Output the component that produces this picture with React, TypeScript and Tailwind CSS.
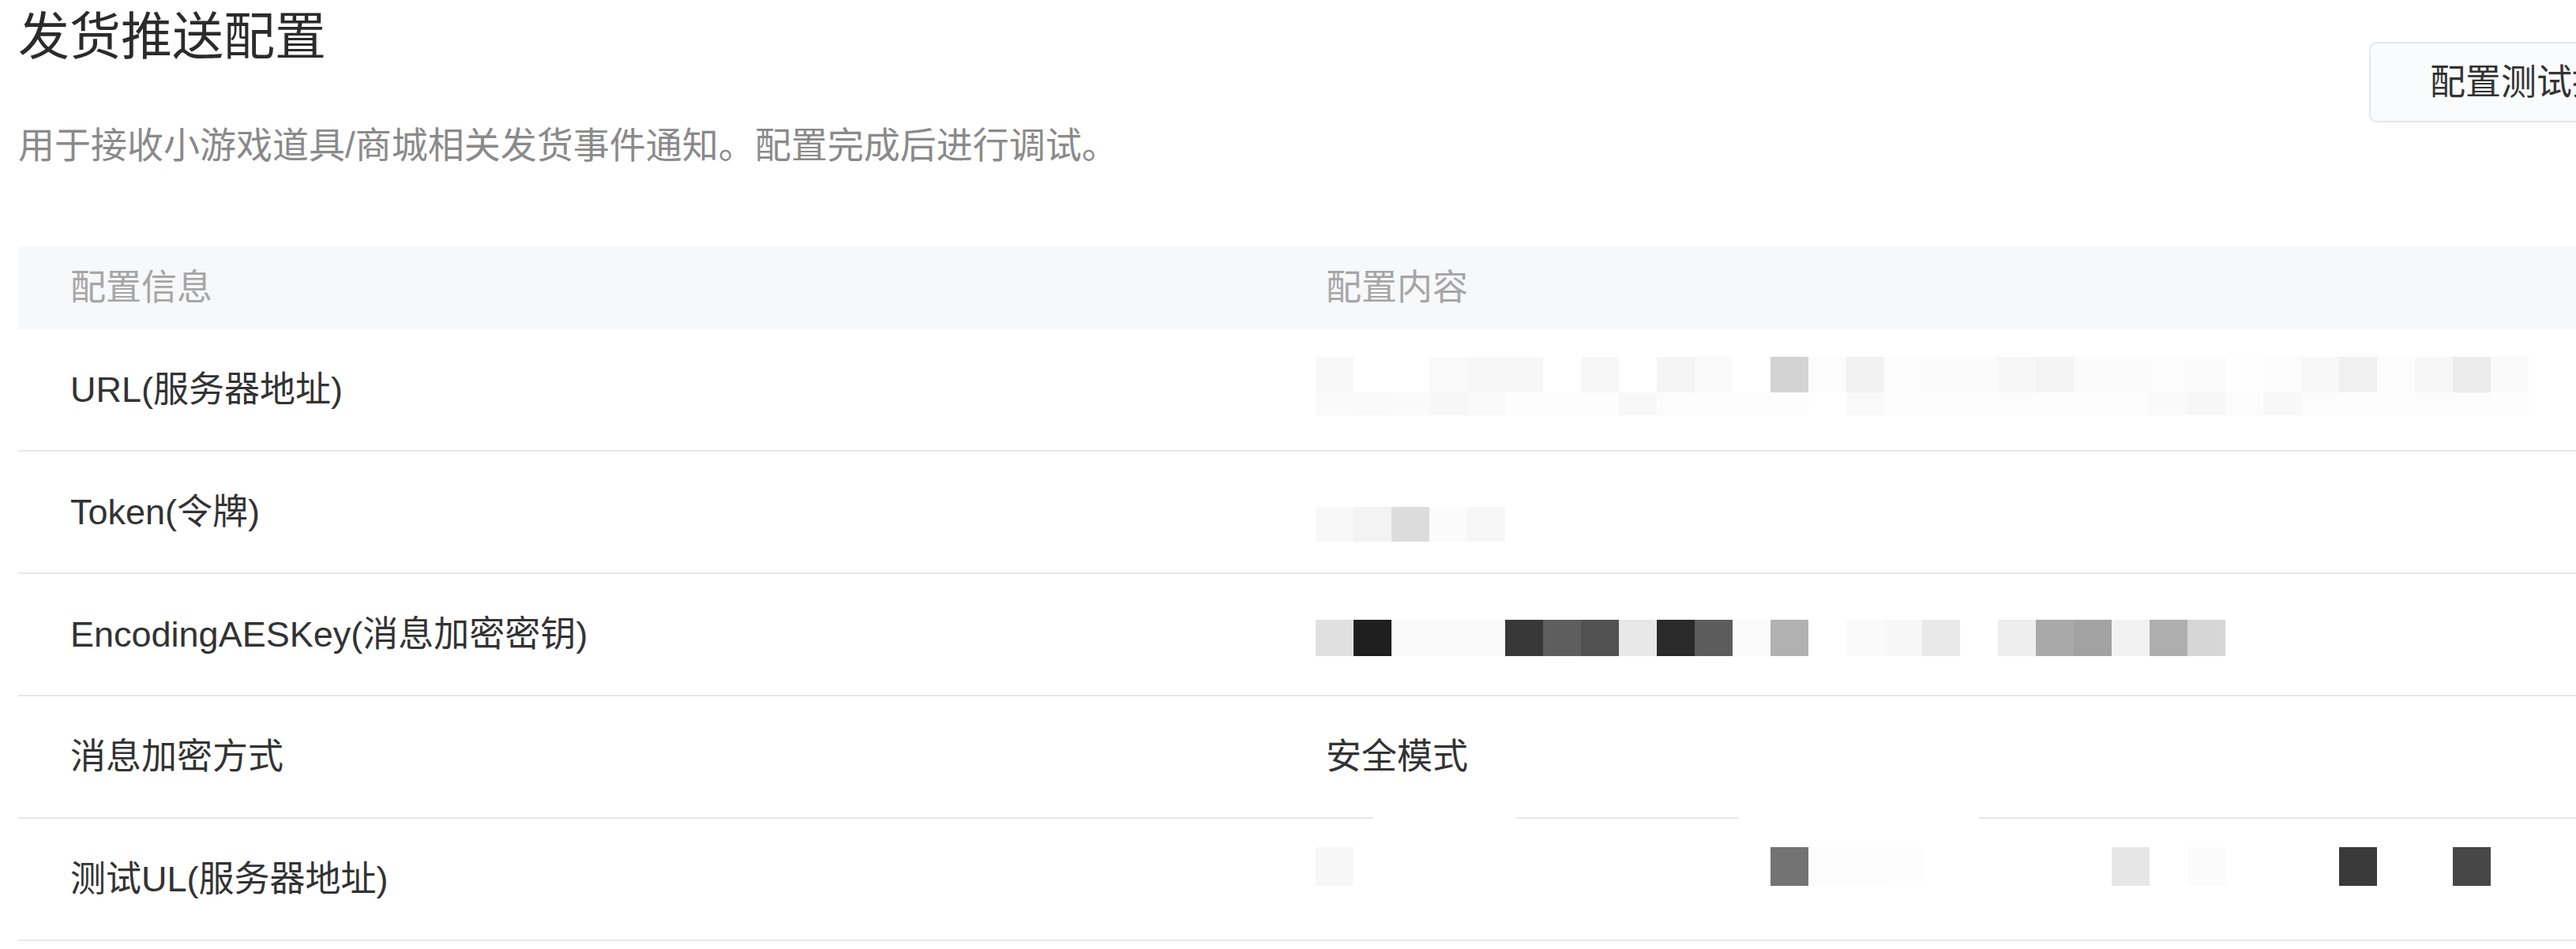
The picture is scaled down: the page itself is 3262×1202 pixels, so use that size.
import React from "react";

const W = "#ffffff";

const row1Top: string[] = [
  "#f8f8f8", W, W, "#f9f9f9", "#f7f7f7", "#f7f7f7", W, "#f6f6f6", W, "#f5f5f5",
  "#fafafa", W, "#d3d3d3", "#fcfcfc", "#f2f2f2", "#fcfcfc", "#fbfbfb", "#fbfbfb", "#f6f6f6", "#f4f4f4",
  "#fbfbfb", "#fbfbfb", "#fcfcfc", "#fbfbfb", "#fefefe", "#fcfcfc", "#f8f8f8", "#f1f1f1", "#fcfcfc", "#f7f7f7",
  "#ececec", "#fafafa",
];

const row1Bottom: string[] = [
  "#fafafa", "#f9f9f9", "#fafafa", "#f7f7f7", "#f9f9f9", "#fdfdfd", "#fdfdfd", "#fdfdfd", "#f8f8f8", "#fcfcfc",
  "#fcfcfc", "#fcfcfc", "#fdfdfd", W, "#f9f9f9", "#fcfcfc", "#fcfcfc", "#fcfcfc", "#fcfcfc", "#fcfcfc",
  "#fcfcfc", "#fcfcfc", "#fafafa", "#f7f7f7", "#fcfcfc", "#f8f8f8", "#fcfcfc", "#fcfcfc", "#fcfcfc", "#fcfcfc",
  "#fcfcfc", "#fdfdfd",
];

const row2: string[] = ["#f8f8f8", "#f3f3f3", "#dcdcdc", "#fbfbfb", "#f6f6f6"];

const row3: string[] = [
  "#e0e0e0", "#1f1f1f", "#fafafa", "#fafafa", "#fafafa", "#383838", "#5e5e5e", "#525252", "#e8e8e8", "#2a2a2a",
  "#5c5c5c", "#fbfbfb", "#b1b1b1", W, "#fafafa", "#f7f7f7", "#e9e9e9", W, "#eeeeee", "#a9a9a9",
  "#a2a2a2", "#f2f2f2", "#aeaeae", "#d6d6d6",
];

const row5: string[] = [
  "#f7f7f7", W, W, W, W, W, W, W, W, W,
  W, W, "#737373", "#fcfcfc", "#fcfcfc", "#fdfdfd", W, W, W, W,
  W, "#e6e6e6", W, "#fbfbfb", W, W, W, "#3a3a3a", W, W,
  "#474747",
];

function Strip({ cells, h }: { cells: string[]; h: string }) {
  return (
    <div className={`flex ${h}`}>
      {cells.map((c, i) => (
        <div key={i} className="w-[48px] shrink-0 h-full" style={{ backgroundColor: c }} />
      ))}
    </div>
  );
}

function Row({
  label,
  children,
}: {
  label: string;
  children?: React.ReactNode;
}) {
  return (
    <div className="flex h-[155px] border-b-2 border-[#e7e7ec]">
      <div className="w-[1590px] shrink-0 pl-[66px] flex items-center text-[45px] leading-none text-[#333333]">
        {label}
      </div>
      <div className="relative flex-1 pl-[66px] flex items-center text-[45px] leading-none text-[#333333]">
        {children}
      </div>
    </div>
  );
}

export default function App() {
  return (
    <div className="w-screen min-h-screen overflow-hidden bg-white font-['Liberation_Sans','Noto_Sans_CJK_SC',sans-serif]">
      <div className="w-[3424px] pl-[23px]">
        <div className="flex items-start justify-between">
          <div className="flex flex-col">
            <h1 className="mt-[14px] text-[65px] leading-none font-normal text-[#2b2b2b]">发货推送配置</h1>
            <p className="mt-[82px] text-[46px] leading-none text-[#8a8a8a]">
              用于接收小游戏道具/商城相关发货事件通知。配置完成后进行调试。
            </p>
          </div>
          <button className="mt-[53px] h-[102px] w-[424px] shrink-0 rounded-[10px] border-2 border-[#e3e6eb] bg-[#fafbfc] pl-[75px] flex items-center text-[45px] leading-none text-[#333333] whitespace-nowrap">
            配置测试推送
          </button>
        </div>

        <div className="mt-[105px]">
          <div className="flex h-[105px] bg-[#f7f8fa]">
            <div className="w-[1590px] shrink-0 pl-[66px] flex items-center text-[45px] leading-none text-[#a6a6a6]">
              配置信息
            </div>
            <div className="flex-1 pl-[66px] flex items-center text-[45px] leading-none text-[#a6a6a6]">
              配置内容
            </div>
          </div>

          <Row label="URL(服务器地址)">
            <div className="absolute left-[53px] top-[35px]">
              <Strip cells={row1Top} h="h-[45px]" />
              <Strip cells={row1Bottom} h="h-[29px]" />
            </div>
          </Row>
          <Row label="Token(令牌)">
            <div className="absolute left-[53px] top-[70px]">
              <Strip cells={row2} h="h-[44px]" />
            </div>
          </Row>
          <Row label="EncodingAESKey(消息加密密钥)">
            <div className="absolute left-[53px] top-[58px]">
              <Strip cells={row3} h="h-[46px]" />
            </div>
          </Row>
          <Row label="消息加密方式">
            <span>安全模式</span>
            <div className="absolute left-[126px] bottom-[-2px] h-[3px] w-[181px] bg-white" />
            <div className="absolute left-[588px] bottom-[-2px] h-[3px] w-[305px] bg-white" />
          </Row>
          <Row label="测试UL(服务器地址)">
            <div className="absolute left-[53px] top-[36px]">
              <Strip cells={row5} h="h-[49px]" />
            </div>
          </Row>
        </div>
      </div>
    </div>
  );
}
